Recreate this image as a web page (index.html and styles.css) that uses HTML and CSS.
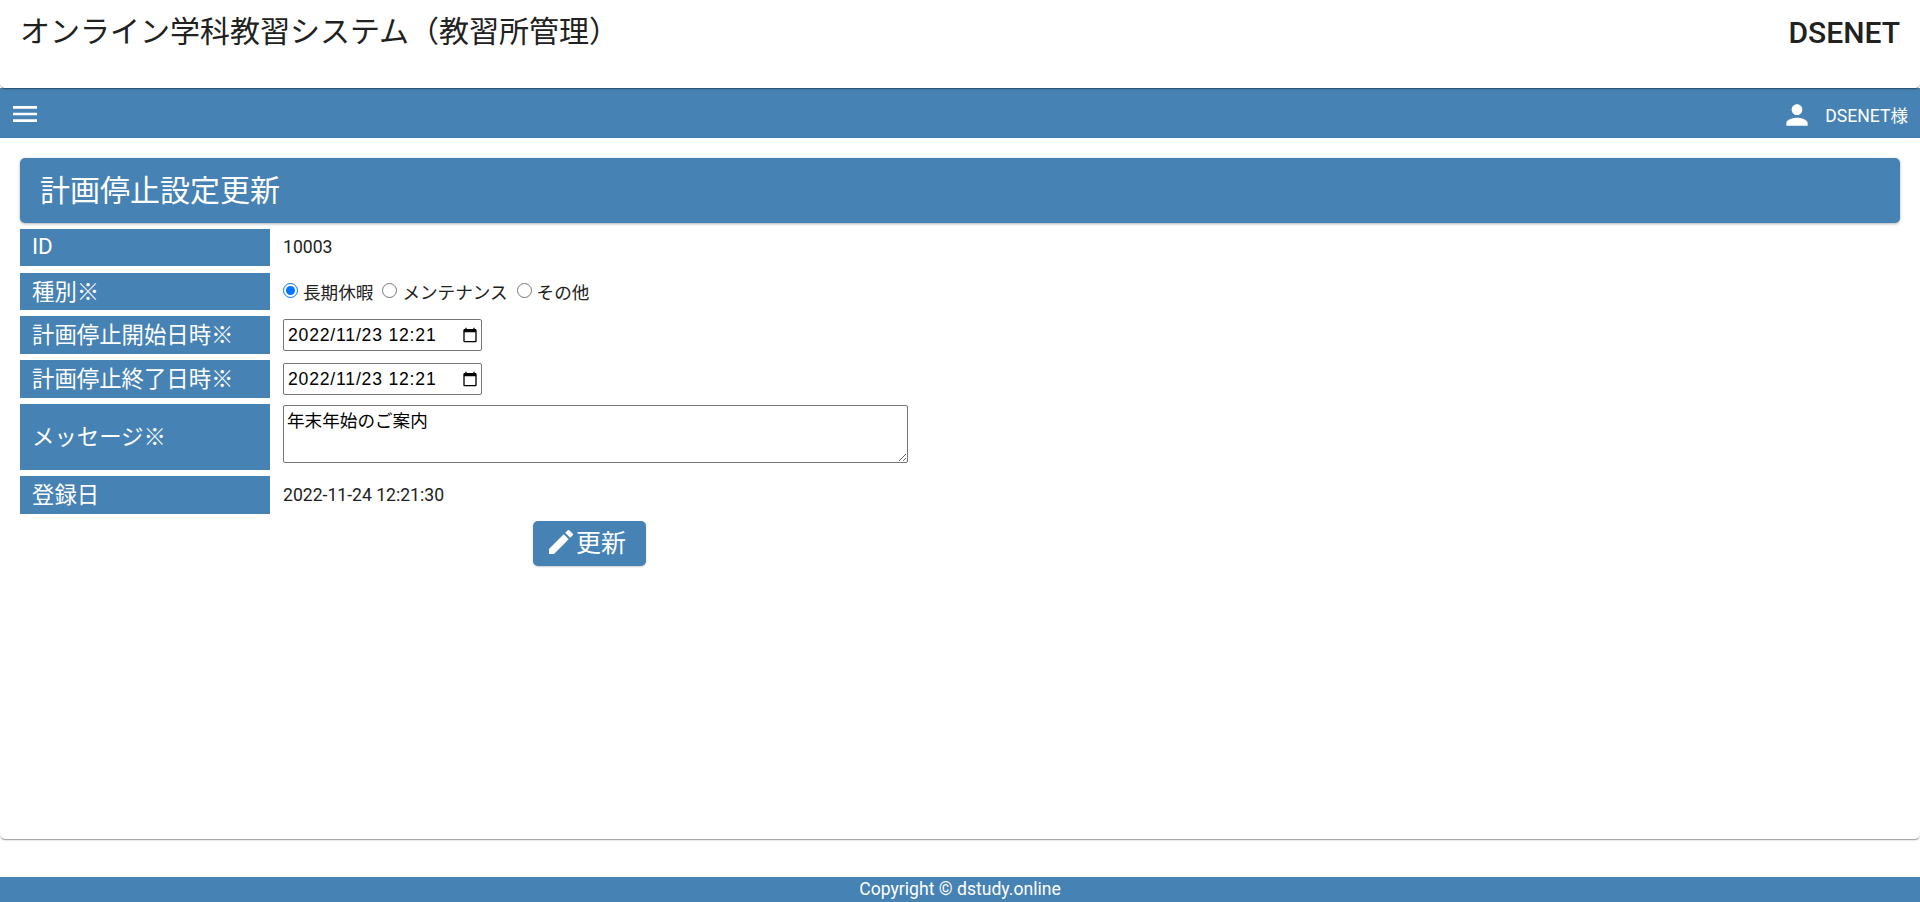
FILE: index.html
```html
<!DOCTYPE html>
<html lang="ja">
<head>
<meta charset="utf-8">
<title>計画停止設定更新</title>
<link rel="stylesheet" href="styles.css">
</head>
<body>
<div class="page">
  <header class="top-card">
    <h1 class="app-title">オンライン学科教習システム（教習所管理）</h1>
    <div class="org-name">DSENET</div>
  </header>
  <nav class="toolbar">
    <svg class="icon-menu" viewBox="0 0 24 24"><path d="M3 18h18v-2H3v2zm0-5h18v-2H3v2zm0-7v2h18V6H3z"/></svg>
    <div class="user">
      <svg class="icon-user" viewBox="0 0 24 24"><path d="M12 12c2.21 0 4-1.79 4-4s-1.79-4-4-4-4 1.79-4 4 1.79 4 4 4zm0 2c-2.67 0-8 1.34-8 4v2h16v-2c0-2.66-5.33-4-8-4z"/></svg>
      <span class="user-name">DSENET様</span>
    </div>
  </nav>
  <main class="main-card">
    <h2 class="page-title">計画停止設定更新</h2>
    <form class="form">
      <div class="row row-id">
        <div class="label">ID</div>
        <div class="value value-text">10003</div>
      </div>
      <div class="row row-kind">
        <div class="label">種別※</div>
        <div class="value radios">
          <label class="radio"><input type="radio" name="kind" checked>長期休暇</label>
          <label class="radio"><input type="radio" name="kind">メンテナンス</label>
          <label class="radio"><input type="radio" name="kind">その他</label>
        </div>
      </div>
      <div class="row">
        <div class="label">計画停止開始日時※</div>
        <div class="value">
          <div class="date-field">
            <input class="date" type="text" value="2022/11/23 12:21">
            <svg class="icon-calendar" viewBox="0 0 24 24"><path d="M20 3h-1V1h-2v2H7V1H5v2H4c-1.1 0-2 .9-2 2v16c0 1.1.9 2 2 2h16c1.1 0 2-.9 2-2V5c0-1.1-.9-2-2-2zm0 18H4V8h16v13z"/></svg>
          </div>
        </div>
      </div>
      <div class="row">
        <div class="label">計画停止終了日時※</div>
        <div class="value">
          <div class="date-field">
            <input class="date" type="text" value="2022/11/23 12:21">
            <svg class="icon-calendar" viewBox="0 0 24 24"><path d="M20 3h-1V1h-2v2H7V1H5v2H4c-1.1 0-2 .9-2 2v16c0 1.1.9 2 2 2h16c1.1 0 2-.9 2-2V5c0-1.1-.9-2-2-2zm0 18H4V8h16v13z"/></svg>
          </div>
        </div>
      </div>
      <div class="row row-msg">
        <div class="label">メッセージ※</div>
        <div class="value value-top"><textarea class="message">年末年始のご案内</textarea></div>
      </div>
      <div class="row">
        <div class="label">登録日</div>
        <div class="value value-text">2022-11-24 12:21:30</div>
      </div>
      <button class="submit" type="button">
        <svg class="icon-edit" viewBox="0 0 24 24"><path d="M3 17.25V21h3.75L17.81 9.94l-3.75-3.75L3 17.25zM20.71 7.04c.39-.39.39-1.02 0-1.41l-2.34-2.34c-.39-.39-1.02-.39-1.41 0l-1.83 1.83 3.75 3.75 1.83-1.83z"/></svg><span class="submit-text">更新</span>
      </button>
    </form>
  </main>
  <footer class="footer">Copyright © dstudy.online</footer>
</div>
</body>
</html>
```
FILE: styles.css
```css
* { box-sizing: border-box; }
html, body { margin: 0; height: 100%; }
body {
  font-family: Roboto, "Noto Sans CJK JP", sans-serif;
  color: #212121;
  background: #fff;
}
.page {
  display: flex;
  flex-direction: column;
  height: 902px;
  overflow: hidden;
}
.top-card {
  position: relative;
  z-index: 2;
  flex: 0 0 88px;
  display: flex;
  justify-content: space-between;
  align-items: flex-start;
  padding: 0 20px;
  background: #fff;
  border-radius: 0 0 5px 5px;
  box-shadow: 0 2px 1px -1px rgba(0,0,0,.2), 0 1px 1px 0 rgba(0,0,0,.14), 0 1px 3px 0 rgba(0,0,0,.12);
}
.app-title {
  margin: 14px 0 0;
  font-size: 30px;
  line-height: 36px;
  font-weight: 400;
}
.org-name {
  margin-top: 16px;
  font-size: 30px;
  line-height: 34px;
  font-weight: 500;
}
.toolbar {
  flex: 0 0 50px;
  display: flex;
  justify-content: space-between;
  align-items: center;
  background: #4682b4;
  color: #fff;
  fill: #fff;
  padding: 2px 12px 0 9px;
}
.icon-menu, .icon-user { width: 32px; height: 32px; display: block; }
.icon-user { margin-top: 2px; }
.user { display: flex; align-items: center; gap: 12px; }
.user-name { font-size: 17.6px; }
.main-card {
  flex: 0 0 701px;
  padding: 20px 20px 0;
  background: #fff;
  border-radius: 0 0 5px 5px;
  box-shadow: 0 2px 1px -1px rgba(0,0,0,.2), 0 1px 1px 0 rgba(0,0,0,.14), 0 1px 3px 0 rgba(0,0,0,.12);
}
.page-title {
  margin: 0;
  height: 65px;
  padding-left: 20px;
  background: #4682b4;
  color: #fff;
  font-size: 30px;
  line-height: 65px;
  font-weight: 400;
  border-radius: 5px;
  box-shadow: 0 1px 3px rgba(0,0,0,.3);
}
.row {
  display: flex;
  height: 38px;
  margin-top: 6px;
}
.row-id { height: 37px; margin-bottom: 7px; }
.row-kind { height: 37px; margin-top: 0; }
.row-msg { height: 66px; }
.label {
  flex: 0 0 250px;
  display: flex;
  align-items: center;
  padding: 0 0 4px 12px;
  background: #4682b4;
  color: #fff;
  font-size: 22.4px;
}
.value {
  display: flex;
  align-items: center;
  padding-left: 13px;
  font-size: 17.6px;
}
.value-text { padding-bottom: 1px; }
.value-top { align-items: flex-start; padding-top: 1px; }
.radios { gap: 9px; }
.radio { display: flex; align-items: center; }
.radio input { margin: 0 5px 3px 0; width: 15px; height: 15px; }
.date-field { position: relative; }
.date {
  display: block;
  width: 199px;
  height: 32px;
  padding: 1px 4px;
  font-family: "Liberation Sans", sans-serif;
  font-size: 17.6px;
  letter-spacing: .8px;
  border: 1px solid #767676;
  border-radius: 2px;
  background: #fff;
  color: #000;
}
.icon-calendar {
  position: absolute;
  top: 8px;
  right: 4px;
  width: 16px;
  height: 16px;
}
.message {
  display: block;
  width: 625px;
  height: 58px;
  padding: 3px 3px;
  font-family: "Noto Sans CJK JP", sans-serif;
  font-size: 17.6px;
  line-height: 22px;
  border: 1px solid #767676;
  border-radius: 2px;
  color: #000;
}
.submit {
  display: flex;
  align-items: center;
  width: 113px;
  height: 45px;
  margin: 7px 0 0 513px;
  padding: 0 0 3px 12px;
  border: 0;
  border-radius: 5px;
  background: #4682b4;
  color: #fff;
  fill: #fff;
  font-family: Roboto, "Noto Sans CJK JP", sans-serif;
  font-size: 25px;
  box-shadow: 0 1px 2px rgba(0,0,0,.2);
}
.submit-text { padding-bottom: 2px; }
.icon-edit { width: 32px; height: 32px; flex: none; margin-right: -1px; }
.footer {
  flex: 0 0 25px;
  margin-top: 38px;
  background: #4682b4;
  color: #fff;
  font-size: 17.6px;
  line-height: 25px;
  text-align: center;
}
```
